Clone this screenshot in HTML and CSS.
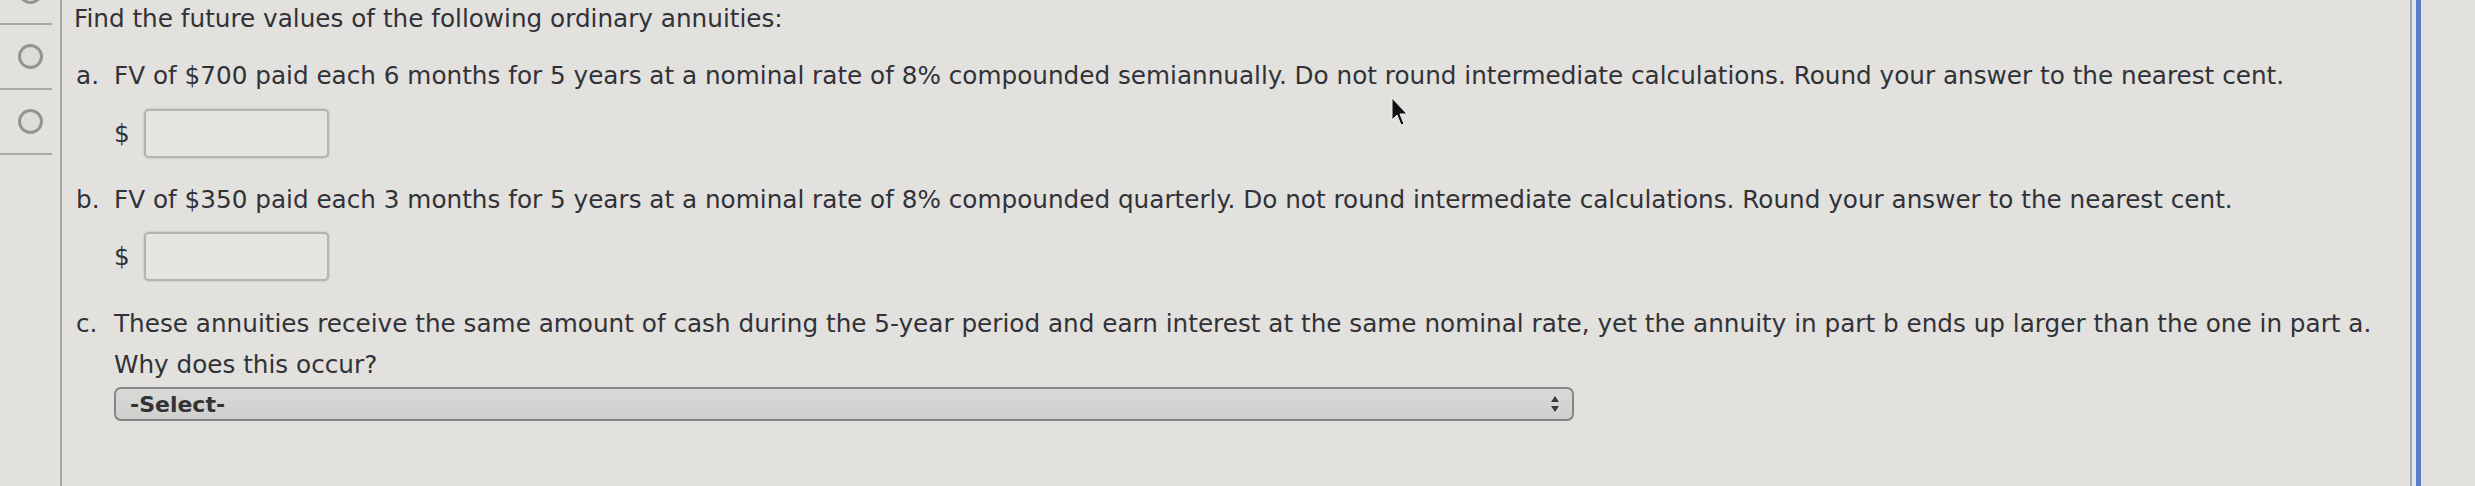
FILE: index.html
```html
<!DOCTYPE html>
<html>
<head>
<meta charset="utf-8">
<link rel="stylesheet" href="styles.css">
</head>
<body>
<div class="page">
  <div class="sidebar">
    <div class="slot"><span class="radio"></span></div>
    <div class="slot"><span class="radio"></span></div>
    <div class="slot"><span class="radio"></span></div>
  </div>
  <div class="content">
    <p class="title">Find the future values of the following ordinary annuities:</p>
    <div class="part part-a">
      <span class="mark">a.</span>
      <div class="body">
        <p class="q">FV of $700 paid each 6 months for 5 years at a nominal rate of 8% compounded semiannually. Do not round intermediate calculations. Round your answer to the nearest cent.</p>
        <div class="answer"><span class="dollar">$</span><span class="field"></span></div>
      </div>
    </div>
    <div class="part part-b">
      <span class="mark">b.</span>
      <div class="body">
        <p class="q">FV of $350 paid each 3 months for 5 years at a nominal rate of 8% compounded quarterly. Do not round intermediate calculations. Round your answer to the nearest cent.</p>
        <div class="answer"><span class="dollar">$</span><span class="field"></span></div>
      </div>
    </div>
    <div class="part part-c">
      <span class="mark">c.</span>
      <div class="body">
        <p class="q qc">These annuities receive the same amount of cash during the 5-year period and earn interest at the same nominal rate, yet the annuity in part b ends up larger than the one in part a.<br>Why does this occur?</p>
        <div class="select"><span class="select-label">-Select-</span>
          <svg class="arrows" width="10" height="18" viewBox="0 0 10 18"><path d="M5 1 L9 7 L1 7 Z M1 11 L9 11 L5 17 Z" fill="#3a3a3a"/></svg>
        </div>
      </div>
    </div>
  </div>
  <div class="edge"></div>
  <div class="rest"></div>
  <svg class="cursor" width="20" height="30" viewBox="0 0 20 30"><path d="M2 1 L2 23 L7 18 L11 28 L14 27 L10 17 L17 17 Z" fill="#111" stroke="#eee" stroke-width="1"/></svg>
</div>
</body>
</html>
```

FILE: styles.css
```css
html, body {
  margin: 0;
  padding: 0;
}
body {
  background: #e2e1dd;
  width: 2475px;
  height: 486px;
  overflow: hidden;
  font-family: "DejaVu Sans", Verdana, sans-serif;
  color: #313238;
}
.page {
  position: relative;
  display: flex;
  height: 486px;
}
.sidebar {
  width: 60px;
  flex: none;
  border-right: 2px solid #a6a6a6;
  margin-top: -40px;
  display: flex;
  flex-direction: column;
}
.slot {
  height: 63px;
  border-bottom: 2px solid #a9a9a7;
  margin-right: 8px;
  display: flex;
  align-items: center;
  justify-content: center;
}
.radio {
  width: 19px;
  height: 19px;
  border-radius: 50%;
  border: 3px solid #939393;
  background: #dcdcd9;
  margin-left: 8px;
}
.content {
  flex: 1;
  padding-left: 12px;
}
p {
  margin: 0;
}
.title {
  font-size: 24.7px;
  line-height: 30px;
  margin-top: 4px;
}
.part {
  display: flex;
}
.mark {
  width: 38px;
  flex: none;
  font-size: 24.7px;
  line-height: 30px;
  padding-left: 2px;
}
.part-a { margin-top: 27px; }
.part-b { margin-top: 27px; }
.part-c { margin-top: 22px; }
.part-c .mark { line-height: 41px; }
.q {
  font-size: 24.7px;
  line-height: 30px;
}
.qc {
  line-height: 41px;
}
.answer {
  display: flex;
  align-items: center;
  margin-top: 18px;
}
.part-b .answer { margin-top: 17px; }
.dollar {
  font-size: 24.7px;
  width: 30px;
}
.field {
  width: 181px;
  height: 45px;
  border: 2px solid #b3b3b1;
  border-radius: 5px;
  background: #e5e4e1;
  box-shadow: 0 0 2px rgba(0,0,0,0.25);
}
.select {
  margin-top: 2px;
  width: 1430px;
  height: 30px;
  border: 2px solid #858585;
  border-radius: 7px;
  background: linear-gradient(#d9d9d7, #cfcfcd);
  display: flex;
  align-items: center;
  justify-content: space-between;
  padding: 0 12px 0 14px;
  box-sizing: content-box;
}
.select-label {
  font-size: 22px;
  font-weight: bold;
  color: #333;
}
.edge {
  width: 2px;
  flex: none;
  background: #a5a5aa;
  border-right: 4px solid #dfe6ee;
}
.rest {
  width: 54px;
  flex: none;
  border-left: 5px solid #5a7ad6;
}
.cursor {
  position: absolute;
  left: 1390px;
  top: 97px;
}
```
